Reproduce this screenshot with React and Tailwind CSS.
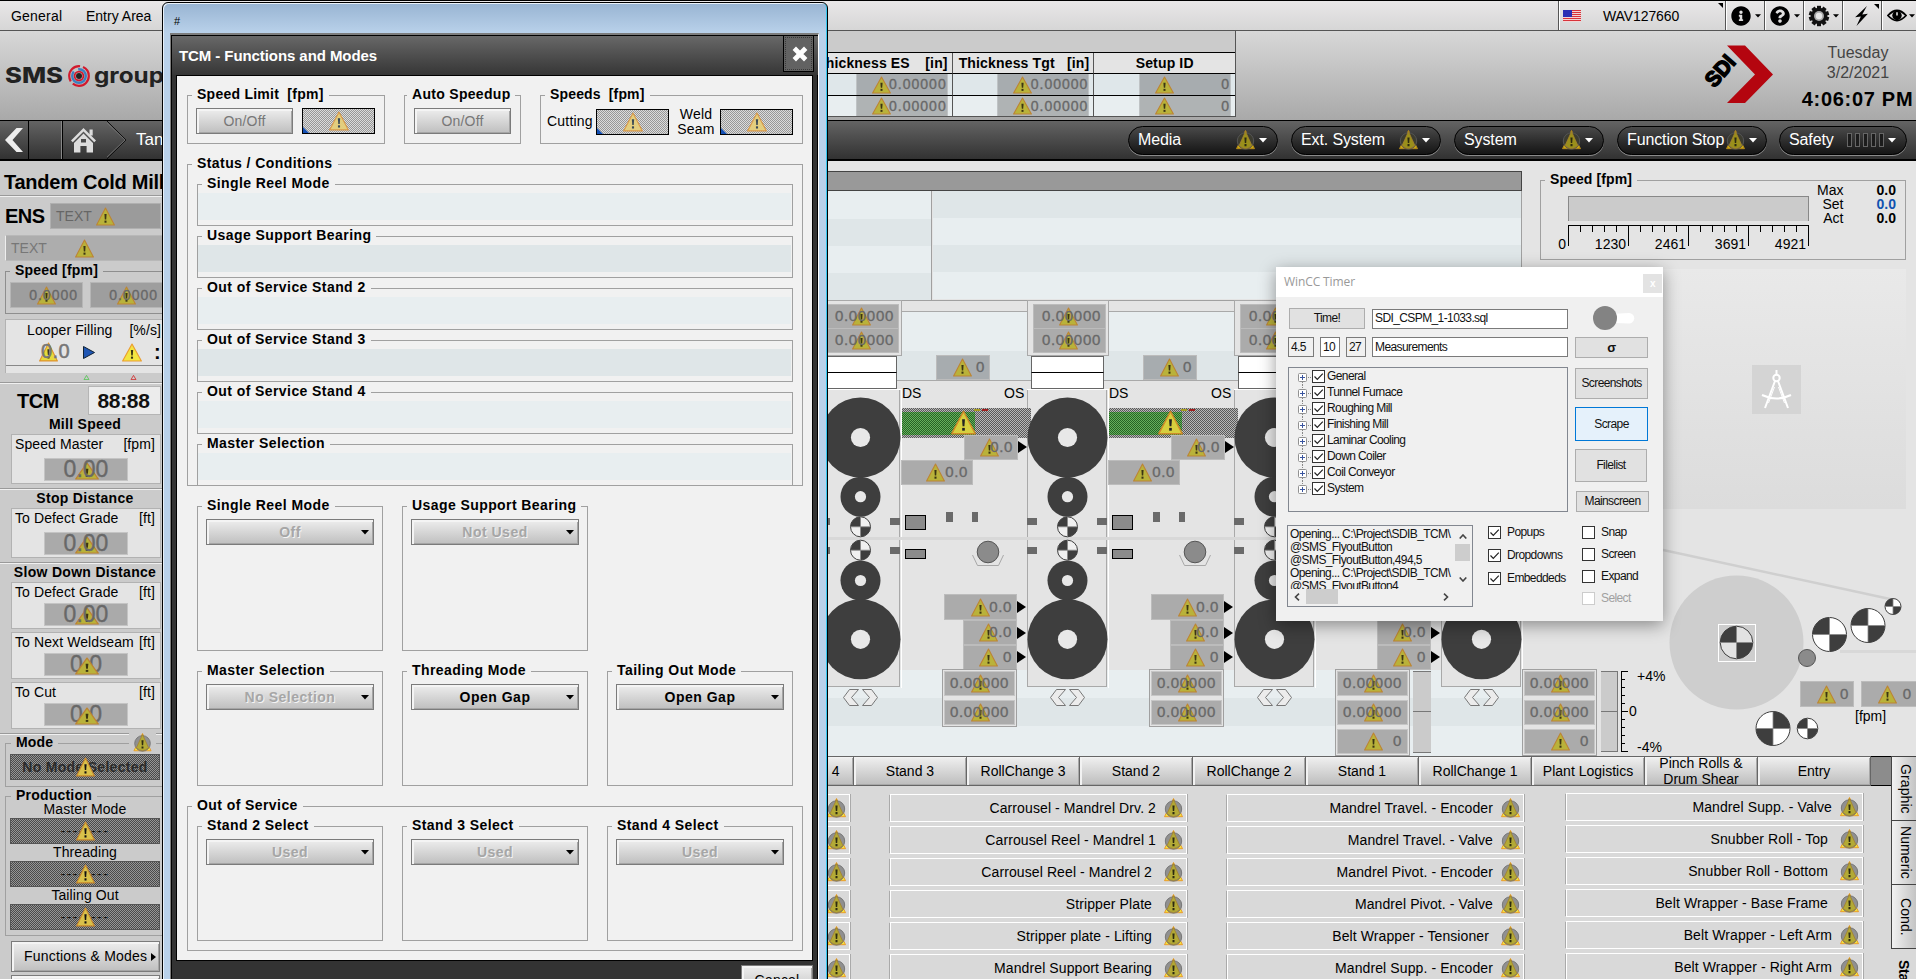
import React from "react";
import { FaInfoCircle, FaQuestionCircle } from "react-icons/fa";

const HATCH_DARK = "bg-[repeating-conic-gradient(#4a4a4a_0_25%,#959595_0_50%)] bg-[length:2px_2px]";
const HATCH_LIGHT = "bg-[repeating-conic-gradient(#989898_0_25%,#dcdcdc_0_50%)] bg-[length:2px_2px]";
const HATCH_BAR = "bg-[repeating-conic-gradient(#5a5a5a_0_25%,#b8b8b8_0_50%)] bg-[length:2px_2px]";
const HATCH_GREEN = "bg-[repeating-conic-gradient(#256325_0_25%,#66b05c_0_50%)] bg-[length:2px_2px]";
const BTN = "border border-[#7b7b7b] bg-linear-to-b from-[#eeeeee] to-[#bfbfbf] shadow-[inset_2px_2px_0_#f4f4f4,inset_-1px_-1px_0_#a5a5a5]";
const NUM = "text-[#686868] [-webkit-text-stroke:0.35px_#686868]";

function Warn({ fill = "#b9b23a", edge = "#bd8434", mark = "#3b3513", className = "w-[19px] h-[19px]" }) {
  return (
    <svg viewBox="0 0 19 19" preserveAspectRatio="none" className={"block shrink-0 " + className}>
      <path d="M9.5 1 L18.4 18 H0.6 Z" fill={fill} stroke={edge} strokeWidth="1.1" strokeLinejoin="round" />
      <path d="M8.4 7 h2.2 l-.4 5.4 h-1.4 z" fill={mark} />
      <rect x="8.5" y="13.6" width="2" height="2.1" fill={mark} />
    </svg>
  );
}

function StatusWarn({ dark = false, className = "w-[19px] h-[20px]" }) {
  return (
    <svg viewBox="0 0 19 20" className={"block shrink-0 " + className}>
      <path d="M9.5 .5 L18.5 18.7 H.5 Z" fill={dark ? "#c9a80c" : "#f5e53a"} stroke={dark ? "#b0851c" : "#e89a2c"} strokeWidth="1" />
      <circle cx="9.5" cy="11" r="8.2" fill={dark ? "#3c3c30" : "#909090"} stroke={dark ? "#555" : "#777"} strokeWidth="1" />
      <path d="M9.5 1.6 L15.9 15.6 Q9.5 21.5 3.1 15.6 Z" fill={dark ? "#9a8f1b" : "#b3aa36"} stroke="#a5802c" strokeWidth=".8" />
      <path d="M8.4 7.5 h2.2 l-.4 5.4 h-1.4 z M8.5 14.1 h2 v2.1 h-2z" fill="#2d2a10" />
    </svg>
  );
}

/* ---------- top bars ---------- */

function Caret({ className = "h-[5px] w-[8px] text-black" }) {
  return (
    <svg viewBox="0 0 8 5" className={"block shrink-0 " + className}>
      <path d="M0 0 H8 L4 4.6 Z" fill="currentColor" />
    </svg>
  );
}

function Flag() {
  return (
    <svg viewBox="0 0 18 12" className="block h-[12px] w-[18px]" shapeRendering="crispEdges">
      <rect width="18" height="12" fill="#f3d5d5" />
      {[0, 2, 4, 6, 8, 10].map((y) => <rect key={y} y={y} width="18" height="1" fill="#d8333a" />)}
      <rect width="9" height="7" fill="#2b2fb4" />
    </svg>
  );
}

function MenuBar() {
  const cell = "flex h-full items-center border-l border-[#555] shadow-[inset_1px_0_0_#fff]";
  return (
    <header className="flex h-[31px] items-center border-t border-b border-t-black border-b-[#555] bg-linear-to-b from-[#e9e7e8] to-[#d6d6d6] text-[14px] leading-[16px]">
      <span className="ml-[11px] w-[75px] tracking-[0.2px]">General</span>
      <span className="grow">Entry Area</span>
      <div className={cell + " relative w-[167px] pl-[4px]"}>
        <Flag />
        <span className="ml-[22px] tracking-[-0.1px]">WAV127660</span>
        <svg viewBox="0 0 5 5" className="absolute top-[2px] right-[2px] h-[5px] w-[5px]"><path d="M0 0H5V5Z" /></svg>
      </div>
      <div className={cell + " w-[39px] gap-[4px] pl-[5px]"}><FaInfoCircle className="h-[20px] w-[20px]" /><Caret className="h-[4px] w-[6px]" /></div>
      <div className={cell + " w-[39px] gap-[4px] pl-[5px]"}><FaQuestionCircle className="h-[20px] w-[20px]" /><Caret className="h-[4px] w-[6px]" /></div>
      <div className={cell + " w-[39px] gap-[3px] pl-[4px]"}>
        <svg viewBox="-11 -11 22 22" className="h-[22px] w-[22px]">
          {[0, 36, 72, 108, 144].map((a) => <rect key={a} x="-2" y="-10.2" width="4" height="20.4" transform={`rotate(${a})`} fill="#111" />)}
          <circle r="8.3" fill="#111" /><circle r="5" fill="#a8a8a8" /><circle r="3.2" fill="#e6e6e6" />
        </svg>
        <Caret className="h-[4px] w-[6px]" />
      </div>
      <div className={cell + " relative w-[39px] pl-[11px]"}>
        <svg viewBox="0 0 16 22" className="h-[20px] w-[15px]"><path d="M14 0 L1 12.5 L7.3 11.6 L2.5 22 L15 8.6 L8.8 9.4 Z" /></svg>
        <svg viewBox="0 0 5 5" className="absolute top-[3px] right-[2px] h-[5px] w-[5px]"><path d="M0 0H5V5Z" /></svg>
      </div>
      <div className={cell + " w-[35px] gap-[2px] pl-[5px]"}>
        <svg viewBox="0 0 22 16" className="h-[15px] w-[20px]">
          <path d="M1 8 Q11 -3 21 8 Q11 19 1 8Z" fill="none" stroke="#000" strokeWidth="2" />
          <circle cx="11" cy="8" r="5.2" fill="#000" /><path d="M11 4.4 V8" stroke="#ddd" strokeWidth="1.8" />
        </svg>
        <Caret className="h-[4px] w-[6px]" />
      </div>
    </header>
  );
}

function SetupTable() {
  const cols = [
    { t: "Thickness ES", u: "[in]", v: "0.00000", w: "w-[142px]" },
    { t: "Thickness Tgt", u: "[in]", v: "0.00000", w: "w-[142px]" },
    { t: "Setup ID", u: "", v: "0", w: "w-[141px]" },
  ];
  return (
    <div className="ml-[649px] flex h-[86px] w-[425px] shrink-0 border-r border-b border-[#555]">
      {cols.map((c, i) => (
        <div key={c.t} className={c.w + " flex flex-col"}>
          <div className="h-[22px] border-b border-black bg-[#cbcbcb]" />
          <div className={"flex h-[21px] items-center border-b border-black bg-[#e4e4e4] text-[14px] font-bold tracking-[0.15px] " + (i < 2 ? "justify-between border-r border-r-[#555] pr-[4px] pl-[6px]" : "justify-center border-r-0")}>
            <span>{c.t}</span>
            {c.u && <span>{c.u}</span>}
          </div>
          {[0, 1].map((r) => (
            <div key={r} className={"flex " + (r ? "h-[20px] bg-[#e8eef0] " : "h-[22px] border-b border-b-black bg-[#dfe7ea] ") + (i < 2 ? "justify-end border-r border-r-[#555] pr-[4px]" : "justify-end pr-[4px]")}>
              <div className={"relative flex h-full w-[92px] items-center justify-end border-x border-[#bfc3c5] " + (r ? "bg-[#afb3b4]" : "bg-[#a7acaf]")}>
                <Warn className="absolute left-[15px] h-[18px] w-[19px]" />
                <span className={"relative text-[14px] tracking-[1px] " + NUM}>{c.v}</span>
              </div>
            </div>
          ))}
        </div>
      ))}
    </div>
  );
}

function Header() {
  return (
    <div className="flex h-[90px] overflow-hidden border-b border-black bg-linear-to-b from-[#d8d8d8] to-[#a9a9a9]">
      <svg viewBox="0 0 162 89" className="h-[89px] w-[162px] shrink-0 font-['Inter','Liberation_Sans',sans-serif]">
        <text x="5" y="51.5" fontSize="21" fontWeight="800" textLength="58" lengthAdjust="spacingAndGlyphs" fill="#222">SMS</text>
        <circle cx="79" cy="45" r="9.8" fill="none" stroke="#d2192d" strokeWidth="2.2" strokeDasharray="22 3" />
        <circle cx="79" cy="45" r="6.8" fill="none" stroke="#3c7fc0" strokeWidth="2.4" strokeDasharray="26 5" />
        <circle cx="79" cy="45" r="4.4" fill="none" stroke="#d2192d" strokeWidth="1.8" />
        <circle cx="79" cy="45" r="3" fill="#222" />
        <text x="94" y="51.5" fontSize="21" fontWeight="700" textLength="70" lengthAdjust="spacingAndGlyphs" fill="#222">group</text>
      </svg>
      <SetupTable />
      <svg viewBox="1690 31 95 89" className="ml-[454px] h-[89px] w-[95px] shrink-0">
        <path d="M1727 45.5 H1745 L1773 74.5 L1745 103 H1727 L1755 74.5 Z" fill="#b4050f" />
        <text transform="translate(1714.5 88.5) rotate(-49)" fontSize="21.5" fontWeight="700" textLength="34" lengthAdjust="spacingAndGlyphs" stroke="#000" strokeWidth="1.5" className="font-['Liberation_Sans',sans-serif]">SDI</text>
      </svg>
      <div className="flex w-[146px] shrink-0 flex-col items-center pt-[12px] text-[16px] leading-[20px] text-[#444]">
        <span>Tuesday</span>
        <span>3/2/2021</span>
        <span className="mt-[4px] -ml-[1px] text-[20px] leading-[24px] font-bold tracking-[0.7px] whitespace-nowrap text-black">4:06:07 PM</span>
      </div>
    </div>
  );
}

function Pill({ label, icon, className }) {
  return (
    <div className={"flex h-[29px] shrink-0 items-center rounded-full border border-black bg-linear-to-b from-[#4a4a4a] to-[#151515] pl-[9px] text-[16px] tracking-[-0.12px] text-white shadow-[0_1px_0_#8a8a8a] " + className}>
      <span className="grow whitespace-nowrap">{label}</span>
      {icon}
      <Caret className="ml-[4px] h-[5px] w-[8px] text-white" />
    </div>
  );
}

function NavBar() {
  return (
    <nav className="flex h-[40px] border-b-2 border-black bg-linear-to-b from-[#646464] to-[#323232]">
      <div className="flex w-[29px] items-center justify-center border-r border-black">
        <svg viewBox="0 0 18 24" className="h-[24px] w-[18px]"><path d="M11.5 0 H18 L7.5 12 L18 24 H11.5 L0 12 Z" fill="#eee" /></svg>
      </div>
      <div className="w-[34px] border-r border-black shadow-[inset_-1px_0_0_#888]" />
      <div className="flex w-[44px] items-center justify-end pr-[11px]">
        <svg viewBox="0 0 25 25" className="h-[25px] w-[25px]" fill="#dcdcdc">
          <path d="M12.5 0 L25 12.5 L23.2 14.2 L12.5 3.6 L1.8 14.2 L0 12.5 Z" />
          <rect x="18.5" y="1.5" width="3.2" height="6" />
          <path d="M12.5 5.5 L22 15 V24.5 H15.6 V18 H9.4 V24.5 H3 V15 Z M10 11 V14.5 H15 V11Z" fillRule="evenodd" />
        </svg>
      </div>
      <svg viewBox="0 0 20 38" className="h-[38px] w-[20px]"><path d="M0 0 L19 19 L0 38" fill="none" stroke="#111" /><path d="M-1 1 L18 19 L-1 37" fill="none" stroke="#777" strokeWidth=".8" /></svg>
      <span className="w-[1001px] pl-[9px] text-[17px] leading-[38px] text-white">Tan</span>
      <div className="flex items-center pt-0">
        <Pill label="Media" className="w-[150px] pr-[10px]" icon={<StatusWarn dark />} />
        <Pill label="Ext. System" className="ml-[13px] w-[150px] pr-[10px]" icon={<StatusWarn dark />} />
        <Pill label="System" className="ml-[13px] w-[150px] pr-[10px]" icon={<StatusWarn dark />} />
        <Pill label="Function Stop" className="ml-[13px] w-[150px] pr-[9px]" icon={<StatusWarn dark />} />
        <Pill
          label="Safety"
          className="ml-[12px] w-[128px] pr-[10px]"
          icon={<span className="flex gap-[3px]">{[0, 1, 2, 3, 4].map((n) => <i key={n} className="h-[14px] w-[5px] border border-[#666] bg-[#1c1c1c]" />)}</span>}
        />
      </div>
    </nav>
  );
}

/* ---------- left sidebar ---------- */

function Rule() {
  return <div className="h-[2px] shrink-0 border-t border-b border-t-[#9a9a9a] border-b-[#f0f0f0]" />;
}

function SidePanel({ label, unit, value, over, className }) {
  return (
    <div className={"ml-[11px] flex w-[150px] shrink-0 flex-col items-center border border-[#b2b2b2] bg-[#e4e4e4] " + className}>
      <div className="flex w-full justify-between pr-[5px] pl-[3px] text-[14px] leading-[16px] tracking-[0.1px]">
        <span>{label}</span>
        <span>{unit}</span>
      </div>
      <div className={"relative mt-auto mb-[2px] flex h-[23px] w-[84px] items-center justify-center border border-[#c4c4c4] bg-[#aaaaaa] text-[23px] leading-[22px] " + NUM}>
        {!over && <Warn className="absolute top-[3px] left-[30px] h-[18px] w-[24px]" />}
        <span className="relative -mt-[1px]">{value}</span>
        {over && <Warn className="absolute top-[3px] left-[30px] h-[18px] w-[24px]" />}
      </div>
    </div>
  );
}

function ModeField({ children, dark }) {
  return (
    <div className={"relative flex h-[26px] w-[150px] items-center justify-center border border-[#555] " + HATCH_DARK + (dark ? " text-[14px] font-bold tracking-[0.3px] text-[#2b2b2b]" : " text-[14px] tracking-[1.4px] text-[#111]")}>
      <span className="whitespace-nowrap">{children}</span>
      <Warn className="absolute top-[2px] left-[65px] h-[20px] w-[19px]" fill="#d9c14a" edge="#c8872c" mark="#111" />
    </div>
  );
}

function Sidebar() {
  return (
    <aside className="flex h-[818px] w-[163px] shrink-0 flex-col overflow-hidden bg-[#cbcbcb] *:shrink-0">
      <h1 className="h-[34px] pt-[9px] pl-[4px] text-[20px] leading-[24px] font-bold tracking-[-0.25px] whitespace-nowrap">Tandem Cold Mill</h1>
      <Rule />
      <div className="mt-[6px] flex h-[26px] items-center pl-[5px]">
        <span className="w-[45px] text-[20px] font-bold tracking-[-0.5px]">ENS</span>
        <div className="relative flex h-[26px] w-[111px] items-center border border-[#b0b0b0] bg-[#9b9b9b] pl-[5px] text-[14px] text-[#666]">
          TEXT<Warn className="absolute left-[45px] h-[19px] w-[19px]" />
        </div>
      </div>
      <div className="relative mt-[6px] ml-[5px] flex h-[26px] items-center border border-[#b8b8b8] border-l-[#eee] bg-[#adadad] pl-[5px] text-[14px] text-[#777]">
        TEXT<Warn className="absolute left-[69px] h-[19px] w-[19px]" />
      </div>
      <fieldset className="mt-[2px] ml-[5px] flex h-[51px] w-[190px] border border-[#8e8e8e]">
        <legend className="ml-[4px] px-[5px] pb-[2px] text-[14px] leading-[14px] font-bold tracking-[0.2px]">Speed [fpm]</legend>
        <div className="mt-[3px] ml-[4px] flex gap-[7px]">
          {[0, 1].map((n) => (
            <div key={n} className={"relative flex h-[26px] w-[73px] items-center justify-end border border-[#b6b6b6] bg-[#9e9e9e] pr-[4px] text-[14px] tracking-[1px] " + NUM}>
              <Warn className="absolute left-[26px] h-[19px] w-[19px]" /><span className="relative">0.0000</span>
            </div>
          ))}
        </div>
      </fieldset>
      <div className="mt-[5px] ml-[5px] h-[54px] border-t border-l border-[#b2b2b2] bg-[#e4e4e4]">
        <div className="flex justify-between pt-[2px] pr-[2px] pb-px pl-[21px] text-[14px] leading-[16px] tracking-[0.1px]">
          <span>Looper Filling</span><span>[%/s]</span>
        </div>
        <div className="flex h-[27px] items-center border-b border-[#888]">
          <div className="relative ml-[33px] h-[20px] w-[44px]">
            <Warn className="absolute top-0 left-0 h-[20px] w-[19px]" fill="#e6da3c" edge="#e0922d" />
            <span className="absolute top-[-2px] left-[2px] text-[20px] leading-[22px] tracking-[0.4px] text-[#777] [-webkit-text-stroke:0.5px_#777]">0.0</span>
          </div>
          <svg viewBox="0 0 12 13" className="h-[13px] w-[12px]"><path d="M.5 .5 L11.5 6.5 L.5 12.5Z" fill="#1f56b4" stroke="#123" /></svg>
          <Warn className="ml-[27px] h-[19px] w-[20px]" fill="#f3e541" edge="#eb9d30" />
          <span className="ml-[12px] text-[20px] leading-[20px] font-bold">:</span>
        </div>
      </div>
      <div className="flex h-[9px] items-center gap-[40px] pl-[83px]">
        <svg viewBox="0 0 7 6" className="h-[5px] w-[7px]"><path d="M3.5 .5 L6.5 5.5 H.5Z" fill="none" stroke="#56c456" /></svg>
        <svg viewBox="0 0 7 6" className="h-[5px] w-[7px]"><path d="M3.5 .5 L6.5 5.5 H.5Z" fill="none" stroke="#d02a2a" /></svg>
      </div>
      <Rule />
      <div className="mt-[2px] flex h-[29px] items-center pl-[17px]">
        <span className="w-[71px] text-[20px] font-bold tracking-[-0.5px]">TCM</span>
        <span className="flex h-[29px] w-[73px] items-center justify-center border border-[#b5b5b5] bg-[#ececec] pr-[2px] text-[21px] font-bold tracking-[-0.3px] text-[#111]">88:88</span>
      </div>
      <h2 className="mt-[1px] mb-px h-[16px] pl-[7px] text-center text-[14px] leading-[16px] font-bold tracking-[0.3px]">Mill Speed</h2>
      <SidePanel className="mt-[1px] h-[50px] pt-[1px]" label="Speed Master" unit="[fpm]" value="0.00" />
      <div className="h-[4px]" /><Rule />
      <h2 className="mb-px h-[16px] pl-[7px] text-center text-[14px] leading-[16px] font-bold tracking-[0.3px]">Stop Distance</h2>
      <SidePanel className="mt-[1px] h-[50px] pt-[1px]" label="To Defect Grade" unit="[ft]" value="0.00" />
      <div className="h-[4px]" /><Rule />
      <h2 className="mb-px h-[16px] pl-[7px] text-center text-[14px] leading-[16px] font-bold tracking-[0.3px]">Slow Down Distance</h2>
      <SidePanel className="mt-[1px] h-[47px] pt-[1px]" label="To Defect Grade" unit="[ft]" value="0.00" />
      <SidePanel className="mt-[3px] h-[47px] pt-[1px]" label="To Next Weldseam" unit="[ft]" value="0.0" over />
      <SidePanel className="mt-[3px] h-[47px] pt-[1px]" label="To Cut" unit="[ft]" value="0.0" over />
      <div className="h-[4px]" /><Rule />
      <fieldset className="relative ml-[5px] h-[52px] w-[190px] border border-[#a0a0a0]">
        <legend className="ml-[5px] px-[5px] pb-[2px] text-[14px] leading-[14px] font-bold tracking-[0.2px]">Mode</legend>
        <div className="mt-[3px] ml-[4px]"><ModeField dark>No Mode Selected</ModeField></div>
        <span className="absolute top-[-18px] left-[123px] bg-[#cbcbcb] px-[4px]"><StatusWarn className="h-[19px] w-[19px]" /></span>
      </fieldset>
      <fieldset className="mt-[1px] ml-[5px] h-[148px] w-[190px] border border-[#a0a0a0]">
        <legend className="ml-[5px] px-[5px] pb-[2px] text-[14px] leading-[14px] font-bold tracking-[0.2px]">Production</legend>
        <div className="-mt-[3px] ml-[4px] flex w-[150px] flex-col text-center text-[14px] leading-[17px] tracking-[0.1px]">
          {["Master Mode", "Threading", "Tailing Out"].map((m) => (
            <React.Fragment key={m}>
              <span className="h-[17px]">{m}</span>
              <ModeField>--------</ModeField>
            </React.Fragment>
          ))}
        </div>
      </fieldset>
      <button className={"mt-[5px] ml-[11px] flex h-[31px] w-[149px] items-center pl-[12px] text-[14px] tracking-[0.2px] whitespace-nowrap " + BTN}>
        Functions &amp; Modes
        <svg viewBox="0 0 5 8" className="ml-[4px] h-[8px] w-[5px]"><path d="M0 0 L5 4 L0 8Z" /></svg>
      </button>
      <div className={"mt-[3px] ml-[11px] h-[31px] w-[149px] " + BTN} />
    </aside>
  );
}

/* ---------- mill diagram ---------- */

function Val({ className, icon, children, num = "pr-[4px] tracking-[0.6px]" }) {
  return (
    <div className={"absolute flex items-center justify-end border border-[#bcbcbc] text-[15px] " + NUM + " " + num + " " + className}>
      <Warn className={"absolute -ml-px h-[19px] w-[19px] " + icon} />
      <span className="relative">{children}</span>
    </div>
  );
}

function Pointer({ className }) {
  return <svg viewBox="0 0 9 12" className={"absolute h-[12px] w-[9px] " + className}><path d="M0 0 L9 6 L0 12Z" /></svg>;
}

function Checker({ cx, cy, r, dark = "#3e3e3e", light = "#f0f0f0" }) {
  return (
    <g>
      <circle cx={cx} cy={cy} r={r} fill={light} stroke={dark} strokeWidth="1" />
      <path d={`M${cx} ${cy} V${cy - r} A${r} ${r} 0 0 0 ${cx - r} ${cy} Z`} fill={dark} />
      <path d={`M${cx} ${cy} V${cy + r} A${r} ${r} 0 0 0 ${cx + r} ${cy} Z`} fill={dark} />
      <path d={`M${cx - r} ${cy} H${cx + r} M${cx} ${cy - r} V${cy + r}`} stroke="#888" strokeWidth=".8" />
    </g>
  );
}

function CheckerNE({ cx, cy, r, light = "#fff" }) {
  return (
    <g>
      <circle cx={cx} cy={cy} r={r} fill={light} stroke="#3e3e3e" strokeWidth="1" />
      <path d={`M${cx} ${cy} V${cy - r} A${r} ${r} 0 0 1 ${cx + r} ${cy} Z`} fill="#3e3e3e" />
      <path d={`M${cx} ${cy} V${cy + r} A${r} ${r} 0 0 1 ${cx - r} ${cy} Z`} fill="#3e3e3e" />
      <path d={`M${cx - r} ${cy} H${cx + r} M${cx} ${cy - r} V${cy + r}`} stroke="#888" strokeWidth=".8" />
    </g>
  );
}

function StandFrame({ className }) {
  return (
    <div className={"absolute top-[-1px] h-[388px] w-[82px] " + className}>
      <div className="relative h-[56px] border border-[#a9a9a9] bg-[#e4e4e4]">
        <Val className="top-[3px] left-[5px] h-[25px] w-[73px] bg-[#ababab]" num="pr-[4px] tracking-[0.7px]" icon="left-[26px]">0.00000</Val>
        <Val className="top-[27px] left-[5px] h-[25px] w-[73px] bg-[#ababab]" num="pr-[4px] tracking-[0.7px]" icon="left-[26px]">0.00000</Val>
      </div>
      <div className="ml-[4px] h-[16px] w-[73px] border border-b-0 border-[#666] bg-white" />
      <div className="ml-[4px] h-[17px] w-[73px] border border-t-black border-[#666] bg-white" />
      <div className="h-[299px] border-t border-r border-white">
        <div className="h-[297px] w-[80px] border-r border-b border-l border-[#a9a9a9] bg-[#e4e4e4]" />
      </div>
    </div>
  );
}

function Rolls({ className }) {
  return (
    <svg viewBox="0 0 82 410" className={"absolute top-0 h-[410px] w-[82px] " + className}>
      <rect x="0" y="236" width="82" height="3" fill="#d8d8d8" />
      <g fill="#3e3e3e">
        <circle cx="40.5" cy="136.5" r="40" /><circle cx="40.5" cy="195.7" r="20" />
        <circle cx="40.5" cy="279.5" r="20" /><circle cx="40.5" cy="338.3" r="40" />
      </g>
      <g fill="#e8e8e8">
        <circle cx="40.5" cy="136.5" r="9.6" /><circle cx="40.5" cy="195.7" r="5.6" />
        <circle cx="40.5" cy="279.5" r="5.6" /><circle cx="40.5" cy="338.3" r="9.6" />
      </g>
      <Checker cx={40.5} cy={225.8} r={10} /><Checker cx={40.5} cy={249.2} r={10} />
      <g fill="#6a6a6a">
        <rect x="0" y="217" width="10" height="7" /><rect x="70" y="217" width="10" height="7" />
        <rect x="0" y="246" width="10" height="7" /><rect x="70" y="246" width="10" height="7" />
      </g>
      <g fill="#ececec" stroke="#777" strokeWidth="1">
        <path d="M29.5 388.5 H38.5 L31.5 396.5 L38.5 404.5 H29.5 L23.5 396.5Z" />
        <path d="M42.5 388.5 H51.5 L57.5 396.5 L51.5 404.5 H42.5 L49.5 396.5Z" />
      </g>
    </svg>
  );
}

function GaugePair({ className, three }) {
  const v = "relative flex h-[25px] items-center justify-end border border-[#c6c6c6] bg-[#ababab] pr-[5px] text-[15px] tracking-[0.7px] " + NUM;
  const icon = "absolute left-[26px] h-[19px] w-[19px]";
  return (
    <div className={"absolute flex w-[75px] flex-col gap-[4px] border border-[#a0a0a0] bg-[#e4e4e4] p-px " + className}>
      <div className={v}><Warn className={icon} /><span className="relative">0.00000</span></div>
      <div className={v}><Warn className={icon} /><span className="relative">0.00000</span></div>
      {three && <div className={v}><Warn className={icon} /><span className="relative">0</span></div>}
    </div>
  );
}

function Gap({ className, last }) {
  return (
    <div className={"absolute top-0 h-[455px] w-[126px] " + className}>
      <Val className="top-[54px] left-[35px] h-[25px] w-[54px] bg-[#a7acaf]" icon="left-[17px]">0</Val>
      <span className="absolute top-[83px] left-[1px] text-[14px] leading-[18px]">DS</span>
      <span className="absolute top-[83px] left-[103px] text-[14px] leading-[18px]">OS</span>
      <div className={"absolute top-[107px] left-[1px] h-[30px] w-[129px] " + HATCH_BAR} />
      <div className={"absolute top-[111px] left-[1px] h-[23px] w-[73px] " + HATCH_GREEN} />
      <div className="absolute top-[108px] left-[73px] h-[2px] w-[6px] bg-[#a59a20]" />
      <div className="absolute top-[108px] left-[81px] h-[2px] w-[6px] bg-[#a02020]" />
      <Warn className="absolute top-[109px] left-[50px] h-[25px] w-[25px]" fill="#d6cf3e" edge="#cf8a2a" mark="#222" />
      <Val className="top-[134px] left-[63px] h-[25px] w-[54px] bg-[#ababab]" icon="left-[16px]">0.0</Val>
      <Pointer className="top-[140px] left-[117px]" />
      <Val className="top-[159px] left-0 h-[25px] w-[72px] bg-[#ababab]" icon="left-[25px]">0.0</Val>
      <svg viewBox="0 0 126 60" className="absolute top-[208px] left-0 h-[60px] w-[126px]">
        <rect x="0" y="28" width="126" height="3" fill="#d8d8d8" />
        <rect x="4.5" y="6.5" width="20" height="14" fill="#8b8b8b" stroke="#000" />
        <rect x="4.5" y="40.5" width="20" height="9" fill="#8b8b8b" stroke="#000" />
        <rect x="45" y="3" width="7" height="10" fill="#6a6a6a" /><rect x="71" y="3" width="6" height="10" fill="#6a6a6a" />
        <circle cx="87" cy="43" r="10.8" fill="#8b8b8b" stroke="#555" />
        <path d="M71.5 46 L76.5 56.5 H97.5 L102.5 46" fill="none" stroke="#a8a8a8" />
      </svg>
      <Val className="top-[293px] left-[43px] h-[26px] w-[73px] bg-[#ababab]" icon="left-[27px]">0.0</Val>
      <Val className="top-[319px] left-[62px] h-[25px] w-[54px] bg-[#ababab]" icon="left-[16px]">0.0</Val>
      <Val className="top-[344px] left-[62px] h-[25px] w-[54px] bg-[#ababab]" icon="left-[16px]">0</Val>
      <Pointer className="top-[300px] left-[116px]" />
      <Pointer className="top-[326px] left-[116px]" />
      <Pointer className="top-[350px] left-[116px]" />
      {last ? (
        <>
          <GaugePair className="top-[368px] left-[20px]" three />
          <div className="absolute top-[370px] left-[98px] h-[82px] w-[18px] border-y border-[#777] bg-[#cbcbcb]"><div className="mt-[39px] border-t border-[#777]" /></div>
        </>
      ) : (
        <GaugePair className="top-[368px] left-[41px]" />
      )}
    </div>
  );
}

function MillDiagram() {
  return (
    <div className="relative h-[455px]">
      <div className="flex h-full flex-col">
        <div className="h-[11px] border-b border-[#a9a9a9] bg-[#e4e4e4]" />
        <div className="h-[39px] bg-[#e8eef0]" />
        <div className="h-[30px] border-b border-[#a9a9a9] bg-[#dfe6e8]" />
        <div className="h-[289px] bg-[#e4e4e4]" />
        <div className="h-[28px] bg-[#e8eef0]" />
        <div className="h-[28px] bg-[#dfe6e8]" />
        <div className="h-[30px] bg-[#e8eef0]" />
      </div>
      <StandFrame className="left-[657px]" /><StandFrame className="left-[864px]" />
      <StandFrame className="left-[1071px]" /><StandFrame className="left-[1278px]" />
      <Gap className="left-[738px]" /><Gap className="left-[945px]" /><Gap className="left-[1152px]" last />
      <Rolls className="left-[657px]" /><Rolls className="left-[864px]" />
      <Rolls className="left-[1071px]" /><Rolls className="left-[1278px]" />
    </div>
  );
}

function MessageTable() {
  return (
    <div className="mt-[10px]">
      <div className="h-[20px] border-t border-r border-b border-[#444] bg-[#999999]" />
      <div className="flex h-[110px] border-r border-b border-[#a0a0a0]">
        <div className="w-[769px] border-r border-[#a0a0a0]">
          <div className="h-[28px] bg-[#e8eef0]" /><div className="h-[27px] bg-[#dfe6e8]" />
          <div className="h-[27px] bg-[#e8eef0]" /><div className="h-[27px] bg-[#dfe6e8]" />
        </div>
        <div className="grow pl-px">
          <div className="h-[27px] bg-[#dfe6e8]" /><div className="h-[27px] bg-[#e8eef0]" />
          <div className="h-[27px] bg-[#dfe6e8]" /><div className="h-[27px] bg-[#e8eef0]" />
        </div>
      </div>
    </div>
  );
}

/* ---------- right column ---------- */

function SpeedGroup() {
  const ticks = Array.from({ length: 21 }, (_, i) => i);
  return (
    <fieldset className="mt-[11px] ml-[18px] flex h-[88px] w-[366px] shrink-0 border border-[#a0a0a0]">
      <legend className="ml-[4px] px-[5px] pb-[2px] text-[14px] leading-[14px] font-bold tracking-[0.1px]">Speed [fpm]</legend>
      <div className="ml-[15px] w-[253px]">
        <div className="mt-[8px] ml-[12px] h-[25px] w-[241px] border border-b-0 border-[#888] bg-[#cbcbcb]" />
        <svg viewBox="0 0 253 30" className="mt-[4px] h-[30px] w-[253px]">
          <path d="M12.5 .5 H252.5" stroke="#000" />
          {ticks.map((i) => <path key={i} d={`M${12.5 + i * 12} 0 V${i % 5 ? 7 : 21}`} stroke="#000" />)}
          {["0", "1230", "2461", "3691", "4921"].map((t, i) => (
            <text key={t} x={10 + i * 60} y="24" fontSize="14" textAnchor="end">{t}</text>
          ))}
        </svg>
      </div>
      <div className="-mt-[5px] flex grow justify-between pr-[9px] pl-[8px] text-right text-[14px] leading-[14px]">
        <div><p>Max</p><p>Set</p><p>Act</p></div>
        <div className="font-bold"><p>0.0</p><p className="text-[#1152b0]">0.0</p><p>0.0</p></div>
      </div>
    </fieldset>
  );
}

function CompassPanel() {
  return (
    <div className="mt-[9px] h-[240px] w-[384px] shrink-0 bg-linear-to-b from-[#e9e9e9] to-[#dcdcdc]">
      <svg viewBox="0 0 49 49" className="relative top-[96px] left-[230px] h-[49px] w-[49px]">
        <rect width="49" height="49" fill="#d4d4d4" />
        <g fill="none" stroke="#fff" strokeWidth="2">
          <circle cx="24.5" cy="13" r="3.2" /><path d="M24.5 5 V10" /><path d="M23 16 L13 43 M26 16 L36 43" />
          <path d="M22.5 22 L16.5 38 M26.5 22 L32.5 38" strokeWidth="1" /><path d="M10 30 Q24.5 37 39 30" />
        </g>
      </svg>
    </div>
  );
}

function CoilDiagram() {
  return (
    <div className="relative h-[247px] w-[394px] shrink-0">
      <svg viewBox="1522 509 394 247" className="absolute inset-0 h-[247px] w-[394px] text-[14px]">
        <path d="M1640 545 L1890 599" stroke="#cfcfcf" strokeWidth="2.5" />
        <rect x="1840" y="650" width="76" height="3" fill="#d8d8d8" />
        <circle cx="1736.5" cy="642.5" r="67" fill="#cecece" />
        <rect x="1718.5" y="624.5" width="37" height="37" fill="none" stroke="#fff" />
        <Checker cx={1736.5} cy={642.5} r={16.3} light="#e2e2e2" />
        <Checker cx={1829.5} cy={634.5} r={17} light="#fff" />
        <Checker cx={1868} cy={625.5} r={17} light="#fff" />
        <Checker cx={1893} cy={606.5} r={8} light="#fff" />
        <circle cx="1807" cy="658" r="8.5" fill="#8b8b8b" stroke="#555" />
        <CheckerNE cx={1773} cy={728.5} r={17} />
        <Checker cx={1807.5} cy={728.5} r={10.3} light="#fff" />
        <rect x="1601" y="671" width="17" height="81" fill="#cbcbcb" />
        <path d="M1601 671.5 H1618 M1601 711.5 H1618 M1601 751.5 H1618 M1617.5 671 V752" stroke="#777" />
        <path d="M1621.5 671 V752" stroke="#000" />
        {Array.from({ length: 11 }, (_, i) => <path key={i} d={`M1621 ${671.5 + i * 8} H${i % 5 ? 1625 : 1628}`} stroke="#000" />)}
        <text x="1637" y="681">+4%</text><text x="1629" y="716">0</text><text x="1637" y="752">-4%</text>
      </svg>
      <GaugePair className="top-[160px] left-0" three />
      <Val className="top-[172px] left-[278px] h-[26px] w-[54px] bg-[#ababab]" icon="left-[17px]">0</Val>
      <Val className="top-[172px] left-[339px] h-[26px] w-[56px] bg-[#ababab]" num="pr-[5px]" icon="left-[17px]">0</Val>
      <span className="absolute top-[198px] left-[333px] text-[14px] leading-[18px]">[fpm]</span>
    </div>
  );
}

/* ---------- lower tabs + lists ---------- */

function ItemColumn({ items, className }) {
  return (
    <div className={"flex w-[298px] shrink-0 flex-col gap-[4px] " + className}>
      {items.map((t, i) => (
        <div key={i} className="flex h-[28px] shrink-0 items-center justify-end border border-white border-l-[#aaa] pr-[3px] shadow-[inset_1px_0_0_#fff,1px_0_0_#aaa]">
          <span className="mr-[8px] text-[14px] tracking-[0.1px] whitespace-pre">{t}</span>
          <StatusWarn />
        </div>
      ))}
    </div>
  );
}

function LowerArea() {
  const tabs = ["RollChange 4", "Stand 3", "RollChange 3", "Stand 2", "RollChange 2", "Stand 1", "RollChange 1", "Plant Logistics", "Pinch Rolls & Drum Shear", "Entry"];
  return (
    <div className="flex h-[223px] overflow-hidden">
      <div className="w-[1728px] shrink-0 bg-[#d9d9d9]">
        <div className="flex h-[30px] pl-[578px]">
          {tabs.map((t) => (
            <div key={t} className="flex w-[113px] shrink-0 items-center justify-center border border-l-0 border-[#666] bg-linear-to-b from-[#f0f0f0] to-[#bdbdbd] px-[6px] text-center text-[14px] leading-[16px] shadow-[inset_2px_1px_0_#f2f2f2,inset_-1px_-1px_0_#a8a8a8]">{t}</div>
          ))}
          <div className="w-[20px] border-y border-black bg-[#8c8c8c]" />
        </div>
        <div className="flex pt-[8px] pl-[389px]">
          <ItemColumn items={["", "", "", "", "", ""]} />
          <ItemColumn className="ml-[39px]" items={["Carrousel - Mandrel Drv. 2", "Carrousel Reel - Mandrel 1", "Carrousel Reel - Mandrel 2 ", "Stripper Plate ", "Stripper plate - Lifting ", "Mandrel Support Bearing "]} />
          <ItemColumn className="ml-[39px]" items={["Mandrel Travel. - Encoder", "Mandrel Travel. - Valve", "Mandrel Pivot. - Encoder", "Mandrel Pivot. - Valve", "Belt Wrapper - Tensioner ", "Mandrel Supp. - Encoder"]} />
          <ItemColumn className="-mt-px ml-[41px]" items={["Mandrel Supp. - Valve", "Snubber Roll - Top ", "Snubber Roll - Bottom ", "Belt Wrapper - Base Frame ", "Belt Wrapper - Left Arm", "Belt Wrapper - Right Arm"]} />
        </div>
      </div>
      <div className="flex w-[25px] shrink-0 flex-col text-[14px] tracking-[0.1px]">
        {["Graphic", "Numeric", "Cond."].map((t) => (
          <div key={t} className="flex h-[64px] w-[25px] shrink-0 items-center justify-center border-t border-l border-[#444] bg-linear-to-r from-[#f2f2f2] to-[#c4c4c4] pl-[3px] [writing-mode:vertical-rl]">{t}</div>
        ))}
        <div className="h-[31px] w-[25px] shrink-0 overflow-hidden border-t border-[#444] bg-[#d9d9d9] pt-[11px] pr-[2px] leading-[20px] font-bold tracking-[-0.3px] [writing-mode:vertical-rl]">Sta</div>
      </div>
    </div>
  );
}

/* ---------- functions & modes popup ---------- */

function Group({ title, className, legend = "ml-[4px] tracking-[0.42px]", children }) {
  return (
    <fieldset className={"shrink-0 border border-[#a0a0a0] " + className}>
      <legend className={"px-[5px] pb-[2px] text-[14px] leading-[14px] font-bold whitespace-pre " + legend}>{title}</legend>
      {children}
    </fieldset>
  );
}

function PushButton() {
  return <button className={"h-[26px] w-[97px] text-[14px] tracking-[0.2px] text-[#777] " + BTN}>On/Off</button>;
}

function HatchField() {
  return (
    <div className={"relative h-[26px] w-[73px] shrink-0 border border-black " + HATCH_LIGHT}>
      <Warn className="absolute top-[2px] left-[26px] h-[20px] w-[20px]" fill="#e3ce7e" edge="#d9994a" mark="#3a4a55" />
      <svg viewBox="0 0 6 6" className="absolute bottom-0 left-0 h-[6px] w-[6px]"><path d="M0 0 L6 6 H0Z" fill="#1450b4" /></svg>
    </div>
  );
}

function SelectGroup({ title, value, on, className }) {
  return (
    <Group title={title} className={"w-[186px] " + className}>
      <div className={"mt-[5px] ml-[8px] flex h-[26px] w-[168px] items-center pr-[4px] text-[14px] font-bold tracking-[0.5px] " + BTN}>
        <span className={"grow pl-[12px] text-center " + (on ? "text-black" : "text-[#a6a6a6] [text-shadow:1px_1px_0_#f4f4f4]")}>{value}</span>
        <Caret />
      </div>
    </Group>
  );
}

function Popup() {
  const states = [
    ["Single Reel Mode", "bg-[#e8eef0]"], ["Usage Support Bearing", "bg-[#dfe6e8]"], ["Out of Service Stand 2", "bg-[#e8eef0]"],
    ["Out of Service Stand 3", "bg-[#dfe6e8]"], ["Out of Service Stand 4", "bg-[#e8eef0]"], ["Master Selection", "bg-[#e8eef0]"],
  ];
  return (
    <div className="absolute top-[2px] left-[162px] flex h-[1000px] w-[666px] flex-col rounded-t-[6px] border border-black bg-linear-to-b from-[#98b4d2] via-[#b9d1ea] via-[30px] to-[#b9d1ea] shadow-[inset_1px_1px_0_#e8f0f8,inset_-1px_0_0_#35c8f0]">
      <div className="h-[30px] shrink-0 pt-[12px] pl-[11px] text-[11px] leading-[12px]">#</div>
      <div className="ml-[7px] flex h-[965px] w-[649px] shrink-0 flex-col border border-t-2 border-[#7c7c7c] border-r-white bg-[#333]">
        <div className="flex h-[40px] shrink-0 border-t border-l border-black bg-linear-to-b from-[#686868] to-[#363636] pr-[3px]">
          <span className="grow pt-[8px] pl-[7px] text-[15px] leading-[24px] font-bold tracking-[-0.08px] text-white">TCM - Functions and Modes</span>
          <div className="mr-[1px] flex h-[36px] w-[31px] items-center justify-center border border-t-0 border-black bg-[#626262] p-px">
            <div className="flex h-full w-full items-center justify-center border border-dotted border-[#3a3a3a]">
              <svg viewBox="0 0 14 14" className="mt-px ml-[2px] h-[16px] w-[16px] shrink-0"><path d="M2 2 L12 12 M12 2 L2 12" stroke="#fff" strokeWidth="4.2" /></svg>
            </div>
          </div>
        </div>
        <div className="flex grow">
          <div className="w-[5px] border-l border-black" />
          <div className="flex w-[637px] flex-col">
            <div className="h-[886px] shrink-0 border border-black bg-[#f1f1f1] pt-[11px] pl-[10px]">
              <div className="flex">
                <Group title="Speed Limit  [fpm]" className="h-[57px] w-[198px]" legend="ml-[4px] tracking-[0.25px]">
                  <div className="mt-[5px] ml-[8px] flex gap-[9px]"><PushButton /><HatchField /></div>
                </Group>
                <Group title="Auto Speedup" className="ml-[19px] h-[57px] w-[117px]" legend="ml-[2px] tracking-[0.3px]">
                  <div className="mt-[5px] ml-[9px]"><PushButton /></div>
                </Group>
                <Group title="Speeds  [fpm]" className="ml-[19px] h-[57px] w-[263px]" legend="ml-[4px] tracking-[0.15px]">
                  <div className="mt-[6px] flex h-[26px] items-center pl-[6px] text-[14px] leading-[15.5px] tracking-[0.2px]">
                    <span className="w-[49px]">Cutting</span><HatchField />
                    <span className="w-[51px] pl-[3px] text-center">Weld Seam</span><HatchField />
                  </div>
                </Group>
              </div>
              <Group title="Status / Conditions" className="mt-[12px] h-[330px] w-[616px] overflow-hidden">
                <div className="mt-[4px] flex h-[309px] flex-col gap-[2px] overflow-hidden pl-[9px]">
                  {states.map(([t, bg]) => (
                    <Group key={t} title={t} className="h-[50px] w-[596px]"><div className={"mt-[1px] h-[27px] w-[593px] " + bg} /></Group>
                  ))}
                </div>
              </Group>
              <div className="mt-[12px] ml-[10px] flex gap-[19px]">
                <SelectGroup title="Single Reel Mode" value="Off" className="h-[153px]" />
                <SelectGroup title="Usage Support Bearing" value="Not Used" className="h-[153px]" />
              </div>
              <div className="mt-[12px] ml-[10px] flex gap-[19px]">
                <SelectGroup title="Master Selection" value="No Selection" className="h-[123px]" />
                <SelectGroup title="Threading Mode" value="Open Gap" on className="h-[123px]" />
                <SelectGroup title="Tailing Out Mode" value="Open Gap" on className="h-[123px]" />
              </div>
              <Group title="Out of Service" className="mt-[12px] h-[153px] w-[616px]">
                <div className="mt-[4px] ml-[9px] flex gap-[19px]">
                  <SelectGroup title="Stand 2 Select" value="Used" className="h-[123px]" />
                  <SelectGroup title="Stand 3 Select" value="Used" className="h-[123px]" />
                  <SelectGroup title="Stand 4 Select" value="Used" className="h-[123px]" />
                </div>
              </Group>
            </div>
            <button className={"mt-[4px] ml-auto h-[31px] w-[72px] shrink-0 text-[14px] tracking-[0.2px] " + BTN}>Cancel</button>
          </div>
          <div className="grow border-r border-black" />
        </div>
      </div>
    </div>
  );
}

/* ---------- timer tool window ---------- */

function Check({ on, off, className = "" }) {
  return (
    <svg viewBox="0 0 13 13" className={"h-[13px] w-[13px] shrink-0 " + className}>
      <rect x=".5" y=".5" width="12" height="12" fill="#fff" stroke={off ? "#ccc" : "#333"} />
      {on && <path d="M2.5 6.5 L5.3 9.3 L10.8 3.6" fill="none" stroke="#222" strokeWidth="1.2" />}
    </svg>
  );
}

function ToolButton({ children, className }) {
  return <button className={"flex items-center justify-center " + className}>{children}</button>;
}

function TimerWindow() {
  const tree = ["General", "Tunnel Furnace", "Roughing Mill", "Finishing Mill", "Laminar Cooling", "Down Coiler", "Coil Conveyor", "System"];
  const box = "flex items-center border border-[#7a7a7a] pl-[2px]";
  const grey = "border border-[#adadad] bg-[#e1e1e1]";
  return (
    <div className="absolute top-[267px] left-[1276px] h-[354px] w-[387px] bg-[#f0f0f0] text-[12px] leading-[13px] tracking-[-0.6px] text-[#111] shadow-[0_4px_16px_rgba(0,0,0,0.4)]">
      <div className="flex h-[30px] items-start justify-between bg-white pt-[7px] pr-px pl-[8px]">
        <span className="font-['Open_Sans','Noto_Sans',sans-serif] text-[12px] leading-[15px] tracking-[-0.1px] text-[#999]">WinCC Timer</span>
        <span className="flex h-[19px] w-[19px] items-center justify-center bg-[#e3e3e3] text-[10px] font-bold text-white">x</span>
      </div>
      <div className="flex pl-[11px]">
        <div className="w-[288px]">
          <div className="mt-[11px] flex items-center gap-[7px] pl-[2px]">
            <ToolButton className={"h-[21px] w-[76px] " + grey}>Time!</ToolButton>
            <div className={box + " h-[20px] w-[196px] bg-white"}>SDI_CSPM_1-1033.sql</div>
          </div>
          <div className="mt-[8px] flex h-[20px] gap-[6px] pl-px">
            <div className={box + " w-[26px]"}>4.5</div>
            <div className={box + " w-[20px] bg-white"}>10</div>
            <div className={box + " w-[20px]"}>27</div>
            <div className={box + " w-[196px] bg-white"}>Measurements</div>
          </div>
          <div className="mt-[10px] ml-px h-[145px] w-[280px] border border-[#828790] pl-[9px]">
            {tree.map((t, i) => (
              <div key={t} className="flex h-[16px] items-center pt-px">
                <svg viewBox="0 0 14 16" className="h-[16px] w-[14px]">
                  {i < 7 && <path d="M4.5 13 V16" stroke="#888" strokeDasharray="1 1" />}
                  {i > 0 && <path d="M4.5 0 V4" stroke="#888" strokeDasharray="1 1" />}
                  <path d="M10 8.5 H14" stroke="#888" strokeDasharray="1 1" />
                  <rect x=".5" y="4.5" width="8" height="8" fill="#fff" stroke="#919191" rx="1" />
                  <path d="M2 8.5 H7 M4.5 6 V11" stroke="#3a559f" />
                </svg>
                <Check on />
                <span className="pl-[2px]">{t}</span>
              </div>
            ))}
          </div>
          <div className="mt-[13px] flex">
            <div className="relative h-[82px] w-[186px] border border-[#828790] p-[2px] pt-[2px]">
              <div className="flex h-[61px]">
                <div className="h-[61px] w-[165px] overflow-hidden whitespace-nowrap">
                  <p>Opening... C:\Project\SDIB_TCM\</p><p>@SMS_FlyoutButton</p><p>@SMS_FlyoutButton,494,5</p><p>Opening... C:\Project\SDIB_TCM\</p><p>@SMS_FlyoutButton4</p>
                </div>
                <div className="flex w-[15px] flex-col items-center">
                  <svg viewBox="0 0 8 5" className="mt-[6px] h-[5px] w-[8px]"><path d="M.7 4.5 L4 1 L7.3 4.5" fill="none" stroke="#444" strokeWidth="1.6" /></svg>
                  <div className="mt-[5px] h-[17px] w-[15px] bg-[#cdcdcd]" />
                  <svg viewBox="0 0 8 5" className="mt-[16px] h-[5px] w-[8px]"><path d="M.7 .5 L4 4 L7.3 .5" fill="none" stroke="#444" strokeWidth="1.6" /></svg>
                </div>
              </div>
              <div className="flex h-[15px] items-center pl-[4px]">
                <svg viewBox="0 0 5 8" className="h-[8px] w-[6px]"><path d="M4.5 .7 L1 4 L4.5 7.3" fill="none" stroke="#444" strokeWidth="1.6" /></svg>
                <div className="ml-[6px] h-[15px] w-[32px] bg-[#cdcdcd]" />
                <svg viewBox="0 0 5 8" className="ml-[105px] h-[8px] w-[6px]"><path d="M.5 .7 L4 4 L.5 7.3" fill="none" stroke="#444" strokeWidth="1.6" /></svg>
              </div>
            </div>
            <div className="flex flex-col gap-[10px] pt-[1px] pl-[15px]">
              {["Popups", "Dropdowns", "Embeddeds"].map((t) => <div key={t} className="flex h-[13px] items-center gap-[6px]"><Check on />{t}</div>)}
            </div>
          </div>
        </div>
        <div className="flex w-[80px] flex-col">
          <svg viewBox="0 0 73 24" className="mt-[9px] h-[24px] w-[73px]"><path d="M26 8.5 L54 7 a5 5 0 0 1 0 10.5 L26 16.5Z" fill="#fff" /><circle cx="30" cy="12" r="12" fill="#838383" /></svg>
          <ToolButton className={"mt-[7px] h-[21px] w-[73px] text-[13px] font-bold " + grey}>σ</ToolButton>
          <ToolButton className={"mt-[10px] h-[31px] w-[73px] " + grey}>Screenshots</ToolButton>
          <ToolButton className="mt-[8px] h-[34px] w-[73px] border border-[#0078d7] bg-[#e5f1fb]">Scrape</ToolButton>
          <ToolButton className={"mt-[8px] h-[33px] w-[72px] " + grey}>Filelist</ToolButton>
          <ToolButton className={"mt-[9px] ml-px h-[21px] w-[73px] " + grey}>Mainscreen</ToolButton>
          <div className="flex flex-col gap-[9px] pt-[14px] pl-[7px]">
            {["Snap", "Screen", "Expand"].map((t) => <div key={t} className="flex h-[13px] items-center gap-[6px]"><Check />{t}</div>)}
            <div className="flex h-[13px] items-center gap-[6px] text-[#a0a0a0]"><Check off />Select</div>
          </div>
        </div>
      </div>
    </div>
  );
}

export default function App() {
  return (
    <div className="relative h-[979px] w-[1916px] overflow-hidden bg-[#e4e4e4] font-['Liberation_Sans',Arial,sans-serif] text-black">
      <MenuBar />
      <Header />
      <NavBar />
      <main className="flex h-[818px]">
        <Sidebar />
        <div className="w-[1753px] shrink-0">
          <div className="flex h-[595px]">
            <div className="w-[1359px] shrink-0"><MessageTable /><MillDiagram /></div>
            <div className="flex w-[394px] shrink-0 flex-col"><SpeedGroup /><CompassPanel /><CoilDiagram /></div>
          </div>
          <LowerArea />
        </div>
      </main>
      <Popup />
      <TimerWindow />
    </div>
  );
}
